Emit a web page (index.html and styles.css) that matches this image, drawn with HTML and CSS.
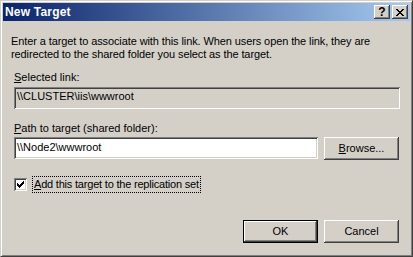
FILE: index.html
```html
<!DOCTYPE html>
<html lang="en">
<head>
  <meta charset="UTF-8" />
  <title>New Target</title>
  <link rel="stylesheet" href="styles.css">
</head>
<body>

  <div class="window">
    <div class="titlebar">
      <span class="title">New Target</span>
      <div class="caption-btns">
        <span class="cap-btn help">?</span>
        <span class="cap-btn">
          <svg width="8" height="7" viewBox="0 0 8 7" shape-rendering="crispEdges">
            <path d="M0 0h2v1h-2z M6 0h2v1h-2z M1 1h2v1h-2z M5 1h2v1h-2z M2 2h4v1h-4z M3 3h2v1h-2z M2 4h4v1h-4z M1 5h2v1h-2z M5 5h2v1h-2z M0 6h2v1h-2z M6 6h2v1h-2z" fill="#000"/>
          </svg>
        </span>
      </div>
    </div>

    <div class="content">
      <p class="intro">Enter a target to associate with this link. When users open the link, they are<br>redirected to the shared folder you select as the target.</p>

      <div class="label label-first"><u>S</u>elected link:</div>
      <div class="field readonly">\\CLUSTER\iis\wwwroot</div>

      <div class="label label-path"><u>P</u>ath to target (shared folder):</div>
      <div class="path-row">
        <div class="field path">\\Node2\wwwroot</div>
        <button class="btn"><u>B</u>rowse...</button>
      </div>

      <div class="check-row">
        <span class="checkbox">
          <svg width="7" height="7" viewBox="0 0 7 7" shape-rendering="crispEdges">
            <path d="M6 0h1v1h-1z M5 1h2v1h-2z M0 2h1v1h-1z M4 2h3v1h-3z M0 3h2v1h-2z M3 3h3v1h-3z M0 4h5v1h-5z M1 5h3v1h-3z M2 6h1v1h-1z" fill="#000"/>
          </svg>
        </span>
        <span class="check-label"><u>A</u>dd this target to the replication set</span>
      </div>

      <div class="actions">
        <button class="btn default">OK</button>
        <button class="btn">Cancel</button>
      </div>
    </div>
  </div>

</body>
</html>
```

FILE: styles.css
```css
/* Reset and base */
* { margin: 0; padding: 0; box-sizing: border-box; }
body {
  font-family: 'Liberation Sans', Arial, sans-serif;
  font-size: 11px;
  line-height: 13px;
  color: #000;
  background: #d4d0c8;
}

/* Window frame */
.window {
  width: 413px;
  height: 257px;
  background: #d4d0c8;
  border: 1px solid;
  border-color: #d4d0c8 #404040 #404040 #d4d0c8;
  box-shadow: inset 1px 1px #fff, inset -1px -1px #808080;
  padding: 2px;
}

/* Title bar */
.titlebar {
  height: 18px;
  display: flex;
  align-items: center;
  justify-content: space-between;
  background: linear-gradient(to right, #0a246a, #a6caf0);
  padding: 0 2px 0 2px;
}
.title {
  color: #fff;
  font-weight: bold;
  font-size: 12px;
  letter-spacing: 0.2px;
}
.caption-btns {
  display: flex;
  gap: 2px;
}
.cap-btn {
  width: 16px;
  height: 14px;
  display: flex;
  align-items: center;
  justify-content: center;
  background: #d4d0c8;
  box-shadow: inset -1px -1px #404040, inset 1px 1px #fff, inset -2px -2px #808080;
}
.cap-btn.help {
  font-weight: bold;
  font-size: 12px;
  padding-top: 1px;
}

/* Body */
.content {
  padding: 14px 11px 0 11px;
}
.intro {
  margin-left: -3px;
  letter-spacing: -0.1px;
}
.label-first { margin-top: 10px; }
.label-path { margin-top: 13px; }

/* Sunken fields */
.field {
  height: 22px;
  background: #fff;
  box-shadow: inset 1px 1px #808080, inset -1px -1px #fff, inset 2px 2px #404040, inset -2px -2px #d4d0c8;
  padding: 3px 3px 0 3px;
  white-space: nowrap;
}
.field.readonly {
  margin-top: 3px;
  margin-right: -1px;
  background: #d4d0c8;
}
.field.path {
  flex: 1;
  padding-top: 4px;
}

.path-row {
  display: flex;
  gap: 6px;
  margin-top: 2px;
}

/* Buttons */
.btn {
  width: 75px;
  height: 23px;
  font: inherit;
  color: #000;
  background: #d4d0c8;
  border: none;
  box-shadow: inset -1px -1px #404040, inset 1px 1px #fff, inset -2px -2px #808080;
}
.btn.default {
  border: 1px solid #000;
}

/* Checkbox */
.check-row {
  display: flex;
  align-items: center;
  margin-top: 16px;
}
.checkbox {
  width: 13px;
  height: 13px;
  display: flex;
  align-items: center;
  justify-content: center;
  background: #fff;
  box-shadow: inset 1px 1px #808080, inset -1px -1px #fff, inset 2px 2px #404040, inset -2px -2px #d4d0c8;
}
.check-label {
  margin-left: 5px;
  border: 1px dotted #000;
  padding: 1px 1px;
  letter-spacing: -0.2px;
}

/* Bottom buttons */
.actions {
  display: flex;
  justify-content: flex-end;
  gap: 6px;
  margin-top: 27px;
}
```
